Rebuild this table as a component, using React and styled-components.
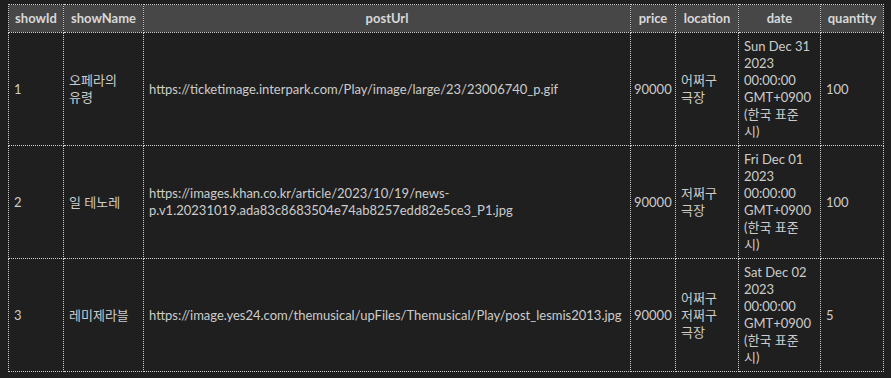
import styled, { createGlobalStyle } from 'styled-components';

const GlobalStyle = createGlobalStyle`
  html, body {
    margin: 0;
    background: #1f1f1f;
  }
  body {
    padding: 4px 8px;
    font-family: Lato, "Noto Sans CJK KR", sans-serif;
    font-size: 13px;
    color: #cccccc;
  }
`;

// widths taken from the dotted column rules of the preview
const columns = [
  { key: 'showId', width: 55 },
  { key: 'showName', width: 80, words: true },
  { key: 'postUrl', width: 487 },
  { key: 'price', width: 45, tight: true },
  { key: 'location', width: 63, words: true },
  { key: 'date', width: 82, narrow: true },
  { key: 'quantity', width: 63 },
];

const rows = [
  {
    showId: '1',
    showName: '오페라의 유령',
    postUrl: 'https://ticketimage.interpark.com/Play/image/large/23/23006740_p.gif',
    price: '90000',
    location: '어쩌구 극장',
    date: 'Sun Dec 31 2023 00:00:00 GMT+0900 (한국 표준시)',
    quantity: '100',
  },
  {
    showId: '2',
    showName: '일 테노레',
    postUrl:
      'https://images.khan.co.kr/article/2023/10/19/news-p.v1.20231019.ada83c8683504e74ab8257edd82e5ce3_P1.jpg',
    price: '90000',
    location: '저쩌구 극장',
    date: 'Fri Dec 01 2023 00:00:00 GMT+0900 (한국 표준시)',
    quantity: '100',
  },
  {
    showId: '3',
    showName: '레미제라블',
    postUrl: 'https://image.yes24.com/themusical/upFiles/Themusical/Play/post_lesmis2013.jpg',
    price: '90000',
    location: '어쩌구 저쩌구 극장',
    date: 'Sat Dec 02 2023 00:00:00 GMT+0900 (한국 표준시)',
    quantity: '5',
  },
];

function App() {
  return (
    <>
      <GlobalStyle />
      <Table>
        <colgroup>
          {columns.map((c) => (
            <Col key={c.key} $width={c.width} />
          ))}
        </colgroup>
        <thead>
          <tr>
            {columns.map((c) => (
              <HeadCell key={c.key}>{c.key}</HeadCell>
            ))}
          </tr>
        </thead>
        <tbody>
          {rows.map((row) => (
            <tr key={row.showId}>
              {columns.map((c) => (
                <Cell key={c.key} $tight={c.tight} $words={c.words} $narrow={c.narrow}>
                  {row[c.key]}
                </Cell>
              ))}
            </tr>
          ))}
        </tbody>
      </Table>
    </>
  );
}

const Table = styled.table`
  border-collapse: collapse;
  table-layout: fixed;
  width: 876px;
`;

const Col = styled.col`
  width: ${(p) => p.$width}px;
`;

const HeadCell = styled.th`
  height: 27px;
  padding: 0 3px;
  background: #474747;
  color: #d8d8d8;
  font-size: 13px;
  font-weight: 700;
  text-align: center;
  line-height: 17px;
  border: 1px dotted #d0d0d0;
  white-space: nowrap;
  overflow: hidden;
`;

const Cell = styled.td`
  padding: 5px ${(p) => (p.$tight ? 2 : p.$narrow ? 8 : 5)}px 5px
    ${(p) => (p.$tight ? 3 : 5)}px;
  line-height: 17px;
  vertical-align: middle;
  text-align: left;
  border: 1px dotted #d0d0d0;
  white-space: ${(p) => (p.$tight ? 'nowrap' : 'normal')};
  word-break: ${(p) => (p.$words ? 'keep-all' : 'normal')};
`;

export default App;
